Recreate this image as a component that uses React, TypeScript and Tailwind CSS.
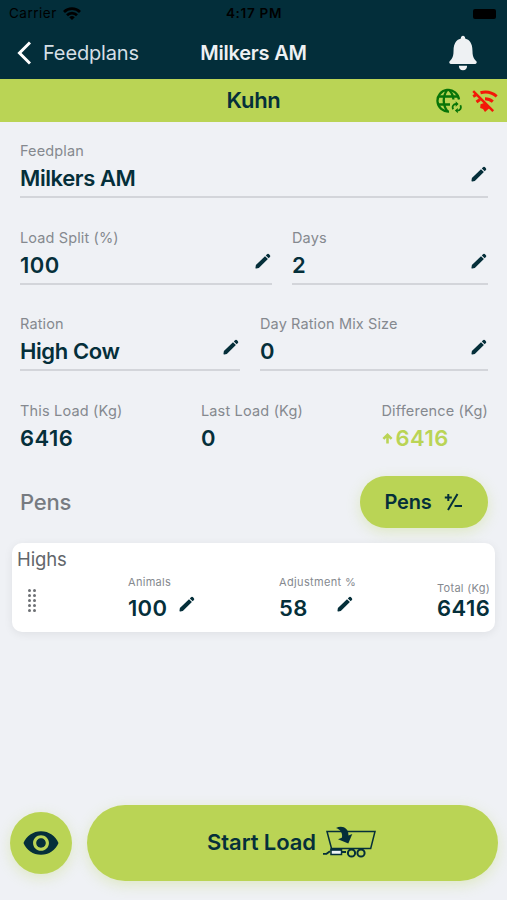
import { clsx } from 'clsx';
import { IoIosNotifications, IoMdEye } from 'react-icons/io';

function PencilIcon({ className }: { className?: string }) {
  return (
    <svg viewBox="0 0 16 16" className={clsx('size-4 shrink-0', className)} fill="currentColor">
      <path d="M.9 12.100 10 3.200l2.900 2.900-9.100 8.900-2.500.5q-1 .1-.8-.9ZM10.800 2.400 12 1.200q.9-.8 1.800-.1l1.100 1.100q.8.9 0 1.800l-1.200 1.200Z" />
    </svg>
  );
}

interface FieldProps {
  label: string;
  value: string;
  className?: string;
}

function Field({ label, value, className }: FieldProps) {
  const numeric = /^\d+$/.test(value);

  return (
    <div className={clsx('h-[60px] border-b-2 border-[#d3d5da]', className)}>
      <p className="text-[14.500px] leading-[25px] tracking-[0.12px] text-[#85898f]">{label}</p>
      <div className="flex items-start justify-between pr-[1px]">
        <p className={clsx('text-[22px] leading-[30px] font-semibold', numeric ? 'tracking-[0.500px]' : 'tracking-[-0.400px]')}>
          {value}
        </p>
        <PencilIcon className="mt-[3px]" />
      </div>
    </div>
  );
}

interface StatProps {
  label: string;
  value: string;
  up?: boolean;
}

function Stat({ label, value, up }: StatProps) {
  return (
    <div>
      <p className="text-[14.500px] leading-[25px] tracking-[0.18px] text-[#85898f]">{label}</p>
      <div className={clsx('flex items-center', up && 'text-[#bad455]')}>
        {up && (
          <svg viewBox="0 0 12 12" className="ml-[1px] mr-[2px] size-[11px]" fill="none" stroke="currentColor" strokeWidth="2.800">
            <path d="M6 11.500V2.500M1.500 6.500 6 2l4.500 4.500" />
          </svg>
        )}
        <p className="text-[22px] leading-[30px] font-semibold tracking-[0.500px]">{value}</p>
      </div>
    </div>
  );
}

function WifiIcon() {
  return (
    <svg viewBox="0 0 18 13" className="h-[13px] w-[18px]" fill="none" stroke="black" strokeWidth="2.7">
      <path d="M1 5a11.300 11.300 0 0 1 16 0M4 8.200a7 7 0 0 1 10 0" />
      <path d="m6.200 10.300 2.800 2.700 2.800-2.700a4 4 0 0 0-5.600 0Z" fill="black" stroke="none" />
    </svg>
  );
}

function GlobeSyncIcon() {
  return (
    <svg viewBox="0 0 26 26" className="h-[26px] w-[26px]" fill="none" stroke="#087408" strokeWidth="2.300">
      <path d="M23 11.500A10.800 10.800 0 1 0 13 23.500" />
      <path d="M11.500 1.500C6.500 8 6.500 17 11.500 23.500M12.500 1.500c3.500 3 4.700 6.300 4.900 10M2.500 8.500h20M2.500 16.500H14" />
      <path d="M17.200 21.300c-1.500-2.700.2-5.300 3-5.300M24.300 17.300c1.500 2.700-.2 5.300-3 5.300" strokeWidth="1.800" />
      <path d="m19.700 13.300 2.900 2.700-2.900 2.700ZM21.800 19.900l-2.900 2.700 2.900 2.700Z" fill="#087408" stroke="none" />
    </svg>
  );
}

function NoWifiIcon() {
  return (
    <svg viewBox="0 0 26 22" className="h-[22px] w-[26px]" fill="none" stroke="#f31808" strokeWidth="3">
      <path d="M8.500 2.800C14 1.200 20 2.500 24.700 6.300M1.200 6.500l3-1.700M13 8.800c3 0 5.600 1 7.800 2.900M4.500 12 8 9.500" />
      <path d="m1.200 1.200 20 20" strokeWidth="2.400" />
      <path d="M8.500 14.200 12 13l5.500 5-4.500 4-2-3-2.800-1Z" fill="#f31808" stroke="none" />
    </svg>
  );
}

function PlusMinusIcon() {
  return (
    <svg viewBox="0 0 18 18" className="h-[18px] w-[18px]" fill="none" stroke="currentColor" strokeWidth="2">
      <path d="M4.300 1v7M.8 4.500h7M13.500 1 4 17M10.500 13H18" />
    </svg>
  );
}

function TrailerIcon() {
  return (
    <svg viewBox="0 0 53 32" className="h-8 w-[53px]" fill="none" stroke="currentColor" strokeWidth="1.500">
      <path d="M4 5.500h48l-4.300 17H8.500Z" />
      <path d="M0 27.800h3.500l3.500-2.500M18 26h5" strokeWidth="1.800" />
      <path d="M8 23.500h10.500v5H8Z" fill="#eef4f5" strokeWidth="1.500" />
      <path d="M7.500 23.500H19" strokeWidth="2.500" />
      <circle cx="28.500" cy="27" r="3.600" strokeWidth="2" />
      <circle cx="38" cy="27" r="3.600" strokeWidth="2" />
      <path d="M13 2c6-2.800 12.500-.5 12.500 7.500l3.800-1.500-4 9.500L15 13.200l3.800-1.400C20 7.500 17.500 3.500 13 2Z" fill="currentColor" stroke="none" />
    </svg>
  );
}

function DragHandle() {
  return (
    <div className="grid w-2 grid-cols-2 gap-x-[2px] gap-y-[2px]">
      {Array.from({ length: 10 }, (_, i) => (
        <span key={i} className="size-[3px] rounded-full bg-[#6d7074]" />
      ))}
    </div>
  );
}

function PenCard() {
  return (
    <section className="mx-3 h-[89px] rounded-[10px] bg-white pl-[5px] pr-[5px] shadow-[0_2px_10px_rgba(0,0,0,0.07)]">
      <h3 className="pt-[3px] text-[18.500px] leading-[27px] tracking-[-0.1px] text-[#62666b]">Highs</h3>
      <div className="flex pt-px">
        <div className="w-[111px] pl-[11px] pt-[15px]">
          <DragHandle />
        </div>
        <div className="w-[151px]">
          <p className="text-[11px] leading-[17px] tracking-[0.3px] text-[#85898f]">Animals</p>
          <div className="flex gap-[12px]">
            <p className="text-[22px] leading-[34px] font-semibold tracking-[0.300px]">100</p>
            <PencilIcon className="mt-[5px]" />
          </div>
        </div>
        <div className="flex-1">
          <p className="text-[11px] leading-[17px] tracking-[0.35px] text-[#85898f]">Adjustment %</p>
          <div className="flex">
            <p className="w-[58px] text-[22px] leading-[34px] font-semibold tracking-[0.300px]">58</p>
            <PencilIcon className="mt-[5px]" />
          </div>
        </div>
        <div className="-mr-px w-[54px] pt-[6px]">
          <p className="text-[11px] leading-[17px] tracking-[0.3px] whitespace-nowrap text-[#85898f]">Total (Kg)</p>
          <p className="text-[22px] leading-[22px] font-semibold tracking-[0.500px]">6416</p>
        </div>
      </div>
    </section>
  );
}

export default function App() {
  return (
    <div className="flex h-[900px] w-[507px] flex-col overflow-hidden bg-[#eff1f5] font-['Inter',sans-serif] text-[#052f3a]">
      <header className="h-[79px] bg-[#032e3a]">
        <div className="grid h-[27px] grid-cols-3 items-center pl-[9px] pr-[9px] text-[13.500px] text-black">
          <div className="flex items-center gap-[6px]">
            <span className="tracking-[0.500px]">Carrier</span>
            <WifiIcon />
          </div>
          <span className="pl-px text-center font-semibold tracking-[0.700px]">4:17 PM</span>
          <span className="mr-[2px] h-[10px] w-[23px] justify-self-end rounded-[2px] bg-black" />
        </div>
        <div className="grid h-[51px] grid-cols-3 items-center px-[17px] text-[20px] text-[#eef1f3]">
          <div className="flex items-center gap-3">
            <svg viewBox="0 0 14 24" className="h-6 w-[14px]" fill="none" stroke="white" strokeWidth="3">
              <path d="M13 1.500 2.500 12 13 22.500" />
            </svg>
            <span className="tracking-[-0.15px] text-[#d5dfe6]">Feedplans</span>
          </div>
          <h1 className="text-center font-semibold tracking-[-0.200px]">Milkers AM</h1>
          <IoIosNotifications className="mr-[5px] size-[44px] justify-self-end" />
        </div>
      </header>

      <div className="grid h-[43px] grid-cols-3 items-center bg-[#bad455] px-[9px]">
        <span />
        <h2 className="text-center text-[22px] font-semibold tracking-[-0.300px]">Kuhn</h2>
        <div className="flex items-center justify-end gap-[10px]">
          <GlobeSyncIcon />
          <NoWifiIcon />
        </div>
      </div>

      <main className="pl-5 pr-[19px] pt-4">
        <Field label="Feedplan" value="Milkers AM" />
        <div className="mt-[27px] flex gap-5">
          <Field label="Load Split (%)" value="100" className="w-[252px]" />
          <Field label="Days" value="2" className="w-[196px]" />
        </div>
        <div className="mt-[26px] flex gap-5">
          <Field label="Ration" value="High Cow" className="w-[220px]" />
          <Field label="Day Ration Mix Size" value="0" className="w-[228px]" />
        </div>
        <div className="mt-[27px] flex justify-between">
          <Stat label="This Load (Kg)" value="6416" />
          <Stat label="Last Load (Kg)" value="0" />
          <Stat label="Difference (Kg)" value="6416" up />
        </div>
        <div className="mt-[23px] flex items-center justify-between">
          <h2 className="text-[22px] font-medium tracking-[-0.200px] text-[#777b81]">Pens</h2>
          <button className="flex h-[52px] w-[128px] items-center justify-center gap-[12px] rounded-full bg-[#bad455] pr-[2px] text-[20px] font-semibold tracking-[-0.200px] shadow-[0_4px_14px_rgba(186,212,85,0.3)]">
            Pens
            <PlusMinusIcon />
          </button>
        </div>
      </main>

      <div className="mt-[15px]">
        <PenCard />
      </div>

      <footer className="mt-auto mb-[19px] flex items-center gap-[15px] pl-[10px] pr-[9px]">
        <button className="flex size-[62px] items-center justify-center rounded-full bg-[#bad455] shadow-[0_4px_14px_rgba(186,212,85,0.3)]">
          <IoMdEye className="size-10" />
        </button>
        <button className="flex h-[76px] flex-1 items-center justify-center gap-[7px] rounded-full bg-[#bad455] pr-[2px] pb-[2px] text-[22px] font-semibold tracking-[-0.080px] shadow-[0_4px_14px_rgba(186,212,85,0.3)]">
          Start Load
          <TrailerIcon />
        </button>
      </footer>
    </div>
  );
}
